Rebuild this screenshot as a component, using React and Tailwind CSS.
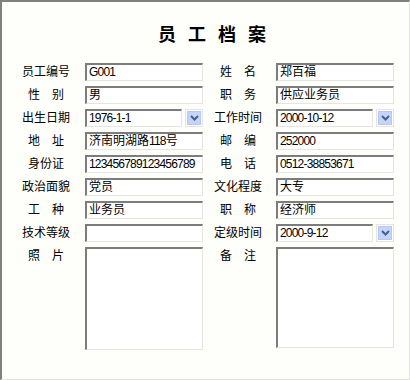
import React from "react";

const rows = [
  { l: "员工编号", lv: "G001", r: "姓　名", rv: "郑百福" },
  { l: "性　别", lv: "男", r: "职　务", rv: "供应业务员" },
  { l: "出生日期", lv: "1976-1-1", ld: true, r: "工作时间", rv: "2000-10-12", rd: true },
  { l: "地　址", lv: "济南明湖路118号", r: "邮　编", rv: "252000" },
  { l: "身份证", lv: "123456789123456789", r: "电　话", rv: "0512-38853671" },
  { l: "政治面貌", lv: "党员", r: "文化程度", rv: "大专" },
  { l: "工　种", lv: "业务员", r: "职　称", rv: "经济师" },
  { l: "技术等级", lv: "", r: "定级时间", rv: "2000-9-12", rd: true },
];

const font = { fontFamily: '"Liberation Sans", "Noto Sans CJK SC", sans-serif' };

const sunken =
  "border-t-2 border-l-2 border-r border-b border-t-[#7c7c7c] border-l-[#7c7c7c] border-r-[#e6e6e0] border-b-[#e6e6e0] bg-white";

// latin digits are narrower in the original, tighten them only
function Txt({ value }) {
  return value.split(/([\x00-\x7f]+)/).map((part, i) =>
    /^[\x00-\x7f]+$/.test(part) ? (
      <span key={i} className="tracking-[-0.8px]">
        {part}
      </span>
    ) : (
      <span key={i}>{part}</span>
    )
  );
}

function Field({ value, drop }) {
  if (!drop) {
    return (
      <div className={`w-[118px] h-[18px] ${sunken} pl-[2px] text-[12px] leading-[15px] text-black whitespace-nowrap overflow-hidden`}>
        <Txt value={value} />
      </div>
    );
  }
  return (
    <div className="flex w-[118px] gap-[3px]">
      <div className={`w-[97px] h-[18px] ${sunken} pl-[2px] text-[12px] leading-[15px] text-black whitespace-nowrap overflow-hidden`}>
        <Txt value={value} />
      </div>
      <div className="w-[18px] h-[18px] border border-[#e4e4e4] bg-white p-px">
        <div className="w-full h-full bg-[#c4d5fb] flex items-center justify-center border border-[#b5c8f3]">
          <svg width="9" height="6" viewBox="0 0 9 6">
            <path d="M1 1 L4.5 4.5 L8 1" fill="none" stroke="#4b5d88" strokeWidth="2" />
          </svg>
        </div>
      </div>
    </div>
  );
}

function Label({ text }) {
  return (
    <div className="w-[48px] h-[18px] text-center text-[12px] leading-[18px] text-black whitespace-nowrap">
      {text}
    </div>
  );
}

export default function App() {
  return (
    <div
      className="w-[410px] h-[380px] bg-[#fefefa] border-t-2 border-l-2 border-[#808080] border-r border-b border-r-[#e4e4dc] border-b-[#e4e4dc] flex flex-col"
      style={font}
    >
      <div
        className="pt-[19px] pl-[25px] text-center text-[18px] leading-[24px] font-bold tracking-[12px] text-black"
        style={{ fontFamily: '"Noto Sans CJK SC", sans-serif' }}
      >
        员工档案
      </div>
      <div className="mt-[18px] flex flex-col gap-[5px] pl-[20px]">
        {rows.map((row, i) => (
          <div key={i} className="flex items-center">
            <Label text={row.l} />
            <div className="ml-[15px]">
              <Field value={row.lv} drop={row.ld} />
            </div>
            <div className="ml-[11px]">
              <Label text={row.r} />
            </div>
            <div className="ml-[14px]">
              <Field value={row.rv} drop={row.rd} />
            </div>
          </div>
        ))}
        <div className="flex items-start">
          <Label text="照　片" />
          <div className={`ml-[15px] w-[118px] h-[103px] ${sunken}`} />
          <div className="ml-[11px]">
            <Label text="备　注" />
          </div>
          <div className={`ml-[14px] w-[118px] h-[101px] ${sunken}`} />
        </div>
      </div>
    </div>
  );
}
